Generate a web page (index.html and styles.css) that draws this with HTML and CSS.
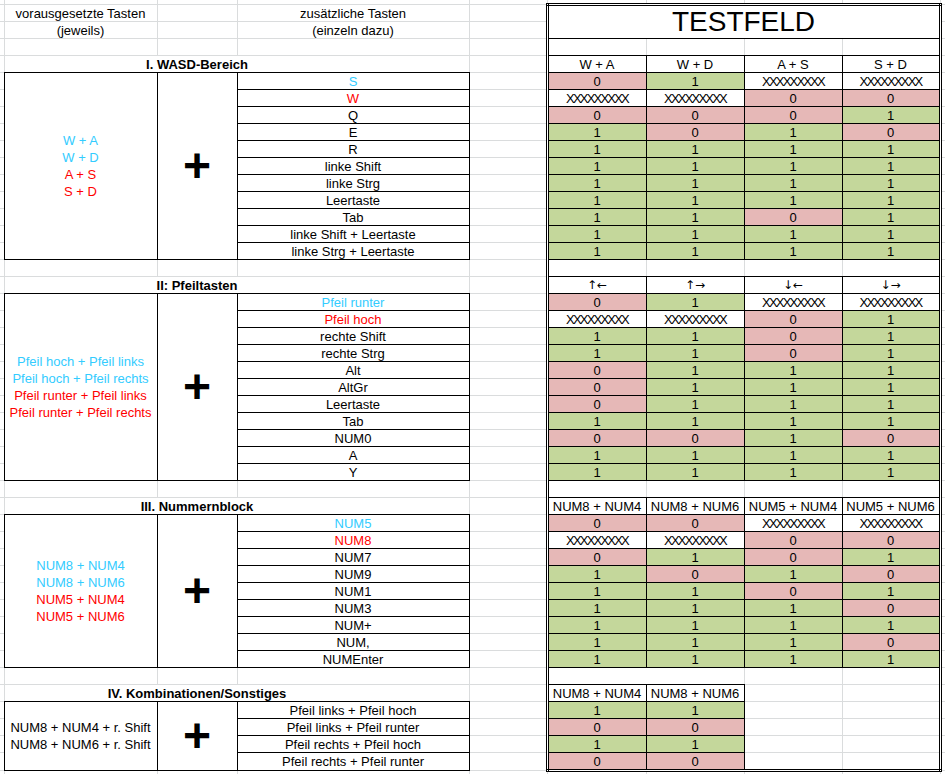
FILE: index.html
```html
<!DOCTYPE html>
<html lang="de">
<head>
<meta charset="utf-8">
<title>Testfeld</title>
<link rel="stylesheet" href="styles.css">
</head>
<body>
<table class="sheet">
<colgroup><col class="c0"><col class="ca"><col class="cb"><col class="cc"><col class="cd"><col class="ce"><col class="cf"><col class="cg"><col class="ch"><col class="ci"></colgroup>
<tbody>
<tr class="edge"><td></td><td></td><td></td><td></td><td></td><td></td><td></td><td></td><td></td><td></td></tr>
<tr><td></td><td>vorausgesetzte Tasten</td><td></td><td>zusätzliche Tasten</td><td></td><td colspan="4" rowspan="2" class="tf">TESTFELD</td><td></td></tr>
<tr><td></td><td>(jeweils)</td><td></td><td>(einzeln dazu)</td><td></td><td></td></tr>
<tr><td></td><td></td><td></td><td></td><td></td><td class="tl"></td><td></td><td></td><td class="tr"></td><td></td></tr>

<tr><td></td><td colspan="3" class="title">I. WASD-Bereich</td><td></td><td class="b tl">W + A</td><td class="b">W + D</td><td class="b">A + S</td><td class="b tr">S + D</td><td></td></tr>
<tr><td></td><td rowspan="11" class="b pre"><div class="blue">W + A</div><div class="blue">W + D</div><div class="red">A + S</div><div class="red">S + D</div></td><td rowspan="11" class="b plus">+</td><td class="b blue">S</td><td></td><td class="b tl no">0</td><td class="b ok">1</td><td class="b xx">XXXXXXXXX</td><td class="b tr xx">XXXXXXXXX</td><td></td></tr>
<tr><td></td><td class="b red">W</td><td></td><td class="b tl xx">XXXXXXXXX</td><td class="b xx">XXXXXXXXX</td><td class="b no">0</td><td class="b tr no">0</td><td></td></tr>
<tr><td></td><td class="b">Q</td><td></td><td class="b tl no">0</td><td class="b no">0</td><td class="b no">0</td><td class="b tr ok">1</td><td></td></tr>
<tr><td></td><td class="b">E</td><td></td><td class="b tl ok">1</td><td class="b no">0</td><td class="b ok">1</td><td class="b tr no">0</td><td></td></tr>
<tr><td></td><td class="b">R</td><td></td><td class="b tl ok">1</td><td class="b ok">1</td><td class="b ok">1</td><td class="b tr ok">1</td><td></td></tr>
<tr><td></td><td class="b">linke Shift</td><td></td><td class="b tl ok">1</td><td class="b ok">1</td><td class="b ok">1</td><td class="b tr ok">1</td><td></td></tr>
<tr><td></td><td class="b">linke Strg</td><td></td><td class="b tl ok">1</td><td class="b ok">1</td><td class="b ok">1</td><td class="b tr ok">1</td><td></td></tr>
<tr><td></td><td class="b">Leertaste</td><td></td><td class="b tl ok">1</td><td class="b ok">1</td><td class="b ok">1</td><td class="b tr ok">1</td><td></td></tr>
<tr><td></td><td class="b">Tab</td><td></td><td class="b tl ok">1</td><td class="b ok">1</td><td class="b no">0</td><td class="b tr ok">1</td><td></td></tr>
<tr><td></td><td class="b">linke Shift + Leertaste</td><td></td><td class="b tl ok">1</td><td class="b ok">1</td><td class="b ok">1</td><td class="b tr ok">1</td><td></td></tr>
<tr><td></td><td class="b">linke Strg + Leertaste</td><td></td><td class="b tl ok">1</td><td class="b ok">1</td><td class="b ok">1</td><td class="b tr ok">1</td><td></td></tr>
<tr><td></td><td></td><td></td><td></td><td></td><td class="tl"></td><td></td><td></td><td class="tr"></td><td></td></tr>

<tr><td></td><td colspan="3" class="title">II: Pfeiltasten</td><td></td><td class="b tl arrow">↑←</td><td class="b arrow">↑→</td><td class="b arrow">↓←</td><td class="b tr arrow">↓→</td><td></td></tr>
<tr><td></td><td rowspan="11" class="b pre"><div class="blue">Pfeil hoch + Pfeil links</div><div class="blue">Pfeil hoch + Pfeil rechts</div><div class="red">Pfeil runter + Pfeil links</div><div class="red">Pfeil runter + Pfeil rechts</div></td><td rowspan="11" class="b plus">+</td><td class="b blue">Pfeil runter</td><td></td><td class="b tl no">0</td><td class="b ok">1</td><td class="b xx">XXXXXXXXX</td><td class="b tr xx">XXXXXXXXX</td><td></td></tr>
<tr><td></td><td class="b red">Pfeil hoch</td><td></td><td class="b tl xx">XXXXXXXXX</td><td class="b xx">XXXXXXXXX</td><td class="b no">0</td><td class="b tr ok">1</td><td></td></tr>
<tr><td></td><td class="b">rechte Shift</td><td></td><td class="b tl ok">1</td><td class="b ok">1</td><td class="b no">0</td><td class="b tr ok">1</td><td></td></tr>
<tr><td></td><td class="b">rechte Strg</td><td></td><td class="b tl ok">1</td><td class="b ok">1</td><td class="b no">0</td><td class="b tr ok">1</td><td></td></tr>
<tr><td></td><td class="b">Alt</td><td></td><td class="b tl no">0</td><td class="b ok">1</td><td class="b ok">1</td><td class="b tr ok">1</td><td></td></tr>
<tr><td></td><td class="b">AltGr</td><td></td><td class="b tl no">0</td><td class="b ok">1</td><td class="b ok">1</td><td class="b tr ok">1</td><td></td></tr>
<tr><td></td><td class="b">Leertaste</td><td></td><td class="b tl no">0</td><td class="b ok">1</td><td class="b ok">1</td><td class="b tr ok">1</td><td></td></tr>
<tr><td></td><td class="b">Tab</td><td></td><td class="b tl ok">1</td><td class="b ok">1</td><td class="b ok">1</td><td class="b tr ok">1</td><td></td></tr>
<tr><td></td><td class="b">NUM0</td><td></td><td class="b tl no">0</td><td class="b no">0</td><td class="b ok">1</td><td class="b tr no">0</td><td></td></tr>
<tr><td></td><td class="b">A</td><td></td><td class="b tl ok">1</td><td class="b ok">1</td><td class="b ok">1</td><td class="b tr ok">1</td><td></td></tr>
<tr><td></td><td class="b">Y</td><td></td><td class="b tl ok">1</td><td class="b ok">1</td><td class="b ok">1</td><td class="b tr ok">1</td><td></td></tr>
<tr><td></td><td></td><td></td><td></td><td></td><td class="tl"></td><td></td><td></td><td class="tr"></td><td></td></tr>

<tr><td></td><td colspan="3" class="title">III. Nummernblock</td><td></td><td class="b tl">NUM8 + NUM4</td><td class="b">NUM8 + NUM6</td><td class="b">NUM5 + NUM4</td><td class="b tr">NUM5 + NUM6</td><td></td></tr>
<tr><td></td><td rowspan="9" class="b pre"><div class="blue">NUM8 + NUM4</div><div class="blue">NUM8 + NUM6</div><div class="red">NUM5 + NUM4</div><div class="red">NUM5 + NUM6</div></td><td rowspan="9" class="b plus">+</td><td class="b blue">NUM5</td><td></td><td class="b tl no">0</td><td class="b no">0</td><td class="b xx">XXXXXXXXX</td><td class="b tr xx">XXXXXXXXX</td><td></td></tr>
<tr><td></td><td class="b red">NUM8</td><td></td><td class="b tl xx">XXXXXXXXX</td><td class="b xx">XXXXXXXXX</td><td class="b no">0</td><td class="b tr no">0</td><td></td></tr>
<tr><td></td><td class="b">NUM7</td><td></td><td class="b tl no">0</td><td class="b ok">1</td><td class="b no">0</td><td class="b tr ok">1</td><td></td></tr>
<tr><td></td><td class="b">NUM9</td><td></td><td class="b tl ok">1</td><td class="b no">0</td><td class="b ok">1</td><td class="b tr no">0</td><td></td></tr>
<tr><td></td><td class="b">NUM1</td><td></td><td class="b tl ok">1</td><td class="b ok">1</td><td class="b no">0</td><td class="b tr ok">1</td><td></td></tr>
<tr><td></td><td class="b">NUM3</td><td></td><td class="b tl ok">1</td><td class="b ok">1</td><td class="b ok">1</td><td class="b tr no">0</td><td></td></tr>
<tr><td></td><td class="b">NUM+</td><td></td><td class="b tl ok">1</td><td class="b ok">1</td><td class="b ok">1</td><td class="b tr ok">1</td><td></td></tr>
<tr><td></td><td class="b">NUM,</td><td></td><td class="b tl ok">1</td><td class="b ok">1</td><td class="b ok">1</td><td class="b tr no">0</td><td></td></tr>
<tr><td></td><td class="b">NUMEnter</td><td></td><td class="b tl ok">1</td><td class="b ok">1</td><td class="b ok">1</td><td class="b tr ok">1</td><td></td></tr>
<tr><td></td><td></td><td></td><td></td><td></td><td colspan="2" class="tl"></td><td></td><td class="tr"></td><td></td></tr>

<tr><td></td><td colspan="3" class="title">IV. Kombinationen/Sonstiges</td><td></td><td class="b tl">NUM8 + NUM4</td><td class="b">NUM8 + NUM6</td><td></td><td class="tr"></td><td></td></tr>
<tr><td></td><td rowspan="4" class="b pre"><div>NUM8 + NUM4 + r. Shift</div><div>NUM8 + NUM6 + r. Shift</div></td><td rowspan="4" class="b plus">+</td><td class="b">Pfeil links + Pfeil hoch</td><td></td><td class="b tl ok">1</td><td class="b ok">1</td><td></td><td class="tr"></td><td></td></tr>
<tr><td></td><td class="b">Pfeil links + Pfeil runter</td><td></td><td class="b tl no">0</td><td class="b no">0</td><td></td><td class="tr"></td><td></td></tr>
<tr><td></td><td class="b">Pfeil rechts + Pfeil hoch</td><td></td><td class="b tl ok">1</td><td class="b ok">1</td><td></td><td class="tr"></td><td></td></tr>
<tr><td></td><td class="b">Pfeil rechts + Pfeil runter</td><td></td><td class="b tl tb no">0</td><td class="b tb no">0</td><td class="tb"></td><td class="tr tb"></td><td></td></tr>
<tr class="tail"><td></td><td></td><td></td><td></td><td></td><td></td><td></td><td></td><td></td><td></td></tr>
</tbody>
</table>
</body>
</html>
```

FILE: styles.css
```css
html, body {
  margin: 0;
  padding: 0;
  overflow: hidden;
  background: #ffffff;
}

body {
  font-family: "Liberation Sans", Arial, "DejaVu Sans", sans-serif;
  font-size: 13px;
  color: #000000;
}

.sheet {
  border-collapse: collapse;
  table-layout: fixed;
  width: 950px;
}

.c0 { width: 4px; }
.ca { width: 153px; }
.cb { width: 80px; }
.cc { width: 232px; }
.cd { width: 78px; }
.ce { width: 99px; }
.cf { width: 98px; }
.cg { width: 98px; }
.ch { width: 98px; }
.ci { width: 10px; }

.sheet td {
  border: 1px solid #dadcdd;
  padding: 0;
  height: 16px;
  line-height: 15px;
  text-align: center;
  vertical-align: middle;
  white-space: nowrap;
  overflow: hidden;
}

.sheet tr.edge td {
  height: 3px;
  border-top: none;
}

.sheet tr.tail td {
  height: 6px;
  border-bottom: none;
}

.sheet td:first-child {
  border-left: none;
}

.sheet td.b {
  border: 1px double #000000;
}

.sheet td.tf {
  border: 3px double #000000;
  border-bottom: 1px double #000000;
  font-size: 28px;
  line-height: 30px;
}

.sheet td.tl { border-left: 3px double #000000; }
.sheet td.tr { border-right: 3px double #000000; }
.sheet td.tb { border-bottom: 3px double #000000; }

.sheet td.title {
  font-weight: bold;
  padding-right: 79px;
}

.sheet td.pre {
  line-height: 17px;
}

.sheet td.plus {
  font-size: 48px;
  font-weight: bold;
  line-height: 40px;
}

.sheet td.no { background: #e6b8b7; }
.sheet td.ok { background: #c4d79b; }

.sheet td.xx {
  letter-spacing: -1.8px;
  background: #ffffff;
}

.sheet td.arrow {
  font-family: "DejaVu Sans", "Liberation Sans", sans-serif;
  font-size: 12px;
  color: #000000;
}

.blue { color: #33ccff; }
.red { color: #ff0000; }
```
